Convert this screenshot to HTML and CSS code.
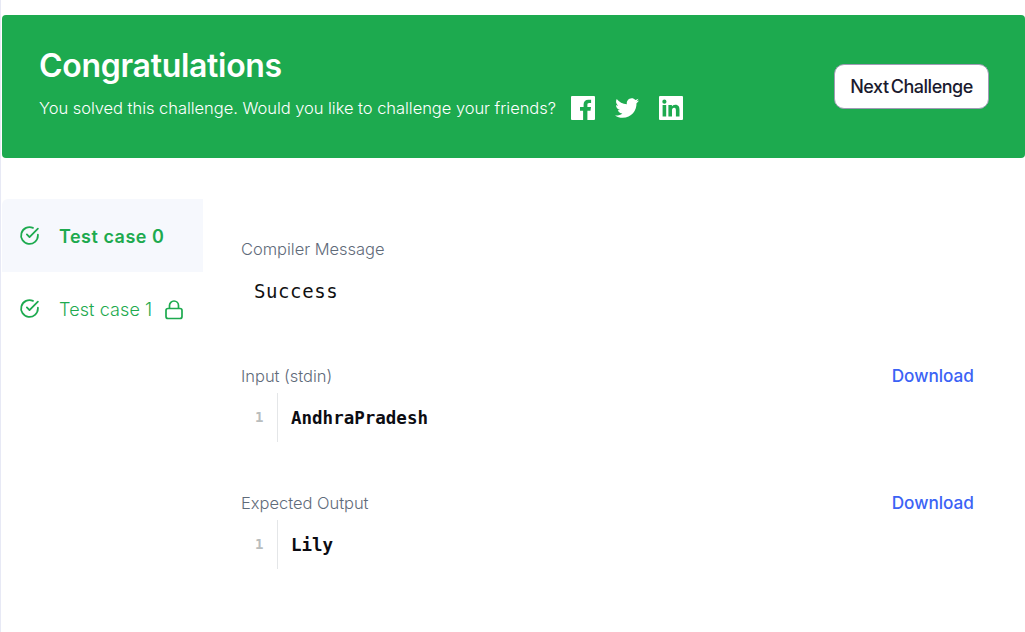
FILE: index.html
```html
<!DOCTYPE html>
<html>
    <head>
        <meta charset="utf-8"/>
        <title>Congratulations</title>
        <link rel="stylesheet" href="styles.css">
    </head>
    <body>
        <div class="banner">
            <div class="banner-left">
                <h1 class="title">Congratulations</h1>
                <div class="share">
                    <span class="share-txt">You solved this challenge. Would you like to challenge your friends?</span>
                    <svg class="share-icon" viewBox="0 0 24 24"><path fill="#fff" d="M1 0h22a1 1 0 0 1 1 1v22a1 1 0 0 1-1 1h-6.600v-9.300h3.100l.5-3.600h-3.600V8.800c0-1 .3-1.800 1.800-1.800h1.900V3.800c-.3 0-1.500-.1-2.800-.1-2.800 0-4.700 1.700-4.700 4.800v2.600H9v3.600h3.100V24H1a1 1 0 0 1-1-1V1a1 1 0 0 1 1-1z"/></svg>
                    <svg class="share-icon" viewBox="0 0 24 24"><path fill="#fff" d="M24 4.600c-.9.4-1.800.7-2.800.8 1-.6 1.800-1.600 2.200-2.700-1 .6-2 1-3.100 1.200-.9-1-2.200-1.600-3.600-1.600-3.200 0-5.500 3-4.800 6C7.700 8.100 4.100 6.100 1.700 3.100.4 5.300 1 8.200 3.200 9.700c-.8 0-1.600-.2-2.200-.6 0 2.300 1.600 4.500 4 4.900-.7.200-1.500.2-2.200.1.600 2 2.500 3.400 4.600 3.400-2.100 1.600-4.700 2.300-7.400 2C2.200 21 4.800 21.800 7.500 21.800c9.100 0 14.300-7.700 14-14.600 1-.7 1.800-1.600 2.500-2.600z"/></svg>
                    <svg class="share-icon" viewBox="0 0 24 24"><path fill="#fff" fill-rule="evenodd" d="M1 0h22a1 1 0 0 1 1 1v22a1 1 0 0 1-1 1H1a1 1 0 0 1-1-1V1a1 1 0 0 1 1-1zM3.600 9v11.400h3.600V9zM5.400 3.600a2.100 2.100 0 1 0 0 4.200 2.100 2.100 0 0 0 0-4.200zM9.400 9v11.400H13v-5.700c0-1.500.3-2.900 2.100-2.900s1.800 1.700 1.800 3v5.600h3.600v-6.300c0-3.100-.7-5.400-4.300-5.400-1.700 0-2.900.9-3.300 1.800V9z"/></svg>
                </div>
            </div>
            <button class="next-btn">Next Challenge</button>
        </div>

        <div class="main">
            <div class="side">
                <div class="case case-active">
                    <svg class="check" viewBox="0 0 20 20"><path d="M18 9.300V10a8 8 0 1 1-4.700-7.300"/><path d="M18 3.500 10 11.500 7.500 9"/></svg>
                    <span>Test case 0</span>
                </div>
                <div class="case">
                    <svg class="check" viewBox="0 0 20 20"><path d="M18 9.300V10a8 8 0 1 1-4.700-7.300"/><path d="M18 3.500 10 11.500 7.500 9"/></svg>
                    <span>Test case 1</span>
                    <svg class="lock" viewBox="0 0 18 20"><rect x="1" y="8.500" width="16" height="10" rx="2"/><path d="M4.500 8.500V5.500a4.500 4.500 0 0 1 9 0v3"/></svg>
                </div>
            </div>

            <div class="content">
                <div class="block block-msg">
                    <div class="block-head"><span class="lbl">Compiler Message</span></div>
                    <div class="msg">Success</div>
                </div>
                <div class="block block-input">
                    <div class="block-head"><span class="lbl">Input (stdin)</span><a class="dl">Download</a></div>
                    <div class="code"><span class="line-no">1</span><span class="code-txt">AndhraPradesh</span></div>
                </div>
                <div class="block">
                    <div class="block-head"><span class="lbl">Expected Output</span><a class="dl">Download</a></div>
                    <div class="code"><span class="line-no">1</span><span class="code-txt">Lily</span></div>
                </div>
            </div>
        </div>
    </body>
</html>
```
FILE: styles.css
```css
html {
    height: 100%;
}

body {
    margin: 0;
    min-height: 632px;
    box-sizing: border-box;
    padding: 15px 0 0 1px;
    border-left: 1px solid #e7e9f5;
    background: #fff;
    font-family: Inter, "Liberation Sans", sans-serif;
    overflow: hidden;
}

.banner {
    display: flex;
    justify-content: space-between;
    align-items: center;
    height: 143px;
    padding: 0 36px 0 37px;
    box-sizing: border-box;
    background-color: #1daa4f;
    border-radius: 4px;
    color: #fff;
}

.banner-left {
    margin-top: -8px;
}

.title {
    margin: 0 0 10px 0;
    font-size: 32px;
    line-height: 40px;
    font-weight: 600;
    letter-spacing: -0.3px;
}

.share {
    display: flex;
    align-items: center;
}

.share-txt {
    font-size: 16.5px;
    line-height: 24px;
    font-weight: 300;
    letter-spacing: -0.04px;
    margin-right: 15px;
}

.share-icon {
    width: 24px;
    height: 24px;
    margin-right: 20px;
}

.next-btn {
    width: 155px;
    height: 45px;
    background: #fff;
    border: 1px solid #a09ab5;
    border-radius: 10px;
    color: #1a1a2e;
    font-family: Inter, sans-serif;
    font-size: 18px;
    font-weight: 500;
    letter-spacing: -0.5px;
    word-spacing: -2px;
}

.main {
    display: flex;
    margin-top: 41px;
}

.side {
    width: 201px;
    flex-shrink: 0;
}

.case {
    display: flex;
    align-items: center;
    height: 73px;
    padding-left: 17px;
    color: #1daa4f;
    font-size: 18px;
    font-weight: 300;
    letter-spacing: 0.1px;
}

.case span {
    padding-top: 2px;
}

.case-active {
    background: #f6f8fd;
    font-weight: 600;
    letter-spacing: 0.5px;
    border-radius: 6px 0 0 0;
}

.check {
    width: 21px;
    height: 21px;
    margin-right: 19px;
    margin-bottom: 1px;
    fill: none;
    stroke: #1daa4f;
    stroke-width: 1.7;
    stroke-linecap: round;
    stroke-linejoin: round;
}

.lock {
    width: 18px;
    height: 20px;
    margin: 2px 0 0 13px;
    fill: none;
    stroke: #1daa4f;
    stroke-width: 1.7;
}

.content {
    flex: 1;
    padding: 38px 51px 0 38px;
}

.block {
    margin-bottom: 50px;
}

.block-msg {
    margin-bottom: 61px;
}

.block-input {
    margin-bottom: 49px;
}

.block-head {
    display: flex;
    justify-content: space-between;
    align-items: center;
    height: 24px;
}

.lbl {
    color: #5f6b7a;
    font-size: 16.5px;
    font-weight: 300;
    letter-spacing: -0.03px;
}

.dl {
    margin-bottom: 1px;
    color: #3b63f5;
    font-size: 17.2px;
    font-weight: 500;
}

.msg {
    margin: 18px 0 0 13px;
    font-family: "DejaVu Sans Mono", monospace;
    font-size: 19px;
    line-height: 24px;
    letter-spacing: 0.6px;
    color: #111;
}

.code {
    display: flex;
    align-items: center;
    height: 49px;
    margin-top: 5px;
}

.line-no {
    width: 37px;
    height: 49px;
    line-height: 49px;
    box-sizing: border-box;
    padding-left: 14px;
    border-right: 1px solid #e4e6e8;
    color: #b9bdbd;
    font-family: "DejaVu Sans Mono", monospace;
    font-size: 14px;
    font-weight: 700;
}

.code-txt {
    margin-left: 13px;
    font-family: "DejaVu Sans Mono", monospace;
    font-size: 17.5px;
    font-weight: 700;
    color: #0c0c12;
}
```
